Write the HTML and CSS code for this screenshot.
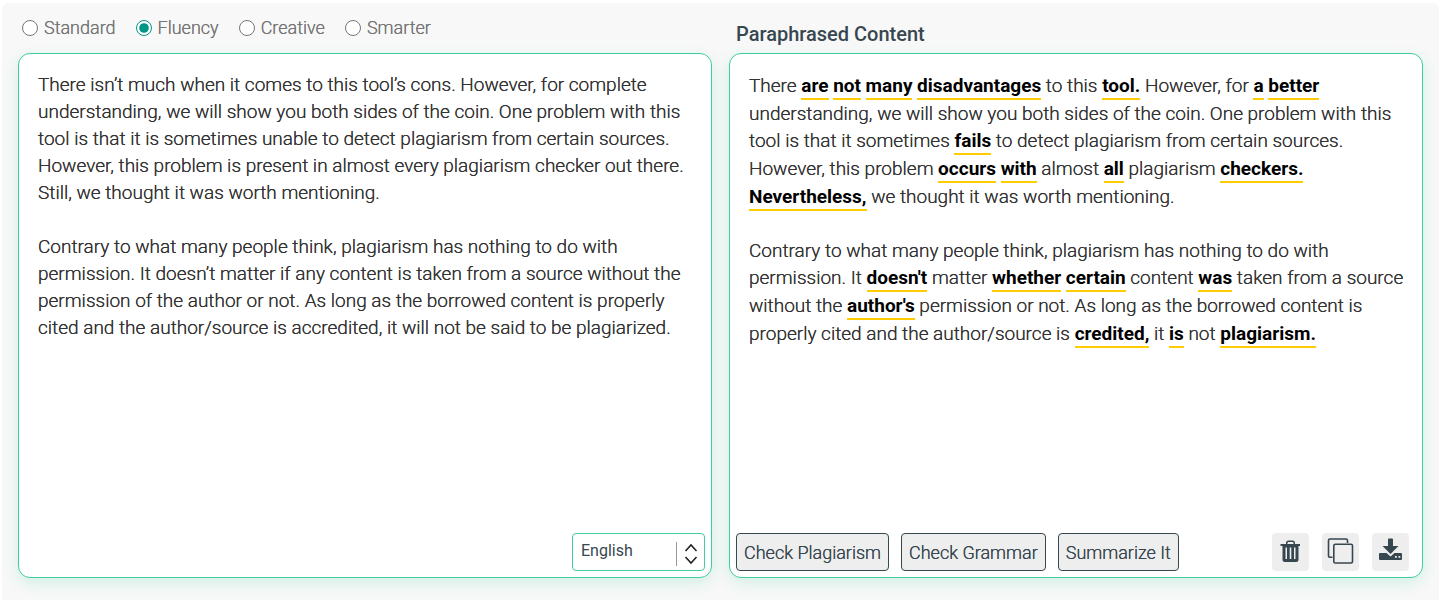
FILE: index.html
```html
<!DOCTYPE html>
<html lang="en">
<head>
<meta charset="utf-8">
<title>Paraphrasing Tool</title>
<link rel="stylesheet" href="styles.css">
</head>
<body>
<main class="tool">
  <section class="column">
    <div class="modes" role="radiogroup" aria-label="Mode">
      <label class="mode"><input type="radio" name="mode">Standard</label>
      <label class="mode"><input type="radio" name="mode" checked>Fluency</label>
      <label class="mode"><input type="radio" name="mode">Creative</label>
      <label class="mode"><input type="radio" name="mode">Smarter</label>
    </div>
    <div class="panel">
      <textarea class="source" aria-label="Text to paraphrase" spellcheck="false">There isn’t much when it comes to this tool’s cons. However, for complete understanding, we will show you both sides of the coin. One problem with this tool is that it is sometimes unable to detect plagiarism from certain sources. However, this problem is present in almost every plagiarism checker out there. Still, we thought it was worth mentioning.

Contrary to what many people think, plagiarism has nothing to do with permission. It doesn’t matter if any content is taken from a source without the permission of the author or not. As long as the borrowed content is properly cited and the author/source is accredited, it will not be said to be plagiarized.</textarea>
      <div class="bar bar-end">
        <div class="language">
          <select class="language-select" aria-label="Language"><option>English</option></select>
          <svg class="language-arrows" viewBox="0 0 30 26" aria-hidden="true"><path d="M1.500 0v24" stroke="#999"/><path d="M10.500 9l5.500-6 5.500 6M10.500 15l5.500 6 5.500-6" fill="none" stroke="#222" stroke-width="1.600"/></svg>
        </div>
      </div>
    </div>
  </section>
  <section class="column">
    <h2 class="title">Paraphrased Content</h2>
    <div class="panel">
      <div class="result">
        <p>There <b>are</b> <b>not</b> <b>many</b> <b>disadvantages</b> to this <b>tool.</b> However, for <b>a</b> <b>better</b> understanding, we will show you both sides of the coin. One problem with this tool is that it sometimes <b>fails</b> to detect plagiarism from certain sources. However, this problem <b>occurs</b> <b>with</b> almost <b>all</b> plagiarism <b>checkers.</b> <b>Nevertheless,</b> we thought it was worth mentioning.</p>
        <p>Contrary to what many people think, plagiarism has nothing to do with permission. It <b>doesn't</b> matter <b>whether</b> <b>certain</b> content <b>was</b> taken from a source without the <b>author's</b> permission or not. As long as the borrowed content is properly cited and the author/source is <b>credited,</b> it <b>is</b> not <b>plagiarism.</b></p>
      </div>
      <div class="bar">
        <button class="action" type="button">Check Plagiarism</button>
        <button class="action" type="button">Check Grammar</button>
        <button class="action" type="button">Summarize It</button>
        <div class="icons">
          <button class="icon" type="button" aria-label="Delete"><svg viewBox="0 0 37 38"><path fill="#37474f" fill-rule="evenodd" d="M8.500 11h5.500v-1a2.500 2.500 0 0 1 2.500-2.500h4a2.500 2.500 0 0 1 2.500 2.500v1H28v2H26.500v13.500a2.500 2.500 0 0 1-2.500 2.500H13a2.500 2.500 0 0 1-2.500-2.500V13h-2zM15.500 11h6v-1a1 1 0 0 0-1-1h-4a1 1 0 0 0-1 1zM13.500 14.500v11.500h1.500V14.500zM17.700 14.500v11.500h1.600V14.500zM22 14.500v11.500h1.500V14.500z"/></svg></button>
          <button class="icon" type="button" aria-label="Copy"><svg viewBox="0 0 37 38"><path fill="none" stroke="#37474f" stroke-width="1.600" d="M10.500 24.300H8a1.500 1.500 0 0 1-1.500-1.500V7.500A1.500 1.500 0 0 1 8 6h16a1.500 1.500 0 0 1 1.500 1.500V10"/><rect x="11.800" y="11.300" width="18.700" height="18.700" rx="1.500" fill="none" stroke="#37474f" stroke-width="1.600"/></svg></button>
          <button class="icon" type="button" aria-label="Download"><svg viewBox="0 0 37 38"><path fill="#37474f" fill-rule="evenodd" d="M16 6.500q0-1 1-1h3q1 0 1 1V13h5.500l-8 8-8-8H16zM8 20h6.500l4 3.500 4-3.500H29q1 0 1 1v5q0 1-1 1H8q-1 0-1-1v-5q0-1 1-1zM23 23v1.800h1.800V23zM26.500 23v1.800h1.800V23z"/></svg></button>
        </div>
      </div>
    </div>
  </section>
</main>
</body>
</html>
```
FILE: styles.css
```css
* { box-sizing: border-box; }

body {
  margin: 0;
  padding: 3px 1px 0 2px;
  background: #fff;
  color: #333;
  font-family: Roboto, "Liberation Sans", sans-serif;
  font-size: 18px;
  font-weight: 300;
}

.tool {
  display: grid;
  grid-template-columns: 1fr 1fr;
  gap: 17px;
  min-height: calc(100vh - 3px);
  padding: 0 16px 22px;
  background: #f8f8f8;
  border-radius: 6px 6px 0 0;
}

.column {
  display: flex;
  flex-direction: column;
  min-width: 0;
}

.modes {
  display: flex;
  gap: 20px;
  height: 50px;
  padding: 0 4px 1px;
  align-items: center;
  color: #757575;
}

.modes,
.source,
.result,
.action {
  text-shadow: 0 0 0 currentColor;
}

.mode {
  display: flex;
  align-items: center;
  gap: 6px;
}

.mode input {
  width: 16px;
  height: 16px;
  margin: 0;
  accent-color: #009688;
}

.title {
  height: 50px;
  margin: 0;
  padding: 12px 7px 0;
  color: #37474f;
  font-size: 20px;
  font-weight: 500;
  line-height: 38px;
}

.panel {
  display: flex;
  flex: 1;
  flex-direction: column;
  background: #fff;
  border: 1px solid #3dcd9f;
  border-radius: 12px;
  box-shadow: 0 5px 15px rgba(61, 205, 159, 0.2);
}

.source,
.result {
  flex: 1;
  width: 100%;
  padding: 18px 12px 0 19px;
  font-size: 19px;
  line-height: 27px;
}

.source {
  display: block;
  margin: 0;
  padding-top: 17px;
  border: 0;
  outline: 0;
  resize: none;
  overflow: hidden;
  background: transparent;
  color: inherit;
  font-family: inherit;
  font-weight: inherit;
}

.result p { margin: 0 0 26px; }

.result b {
  display: inline-block;
  border-bottom: 2px solid #ffcc00;
  color: #000;
  font-weight: 700;
  line-height: 24px;
  text-shadow: none;
}

.bar {
  display: flex;
  gap: 12px;
  padding: 0 13px 6px 6px;
}

.bar-end {
  justify-content: flex-end;
  padding-right: 6px;
}

.language {
  position: relative;
  width: 133px;
  height: 38px;
}

.language-select {
  width: 100%;
  height: 100%;
  padding: 0 32px 3px 8px;
  appearance: none;
  background: #fff;
  border: 1px solid #3dcd9f;
  border-radius: 4px;
  color: #37474f;
  font-family: inherit;
  font-size: 16px;
}

.language-arrows {
  position: absolute;
  top: 9px;
  right: 0;
  width: 30px;
  height: 26px;
  pointer-events: none;
}

.action {
  height: 38px;
  padding: 0 7px;
  background: #eee;
  border: 1px solid #37474f;
  border-radius: 4px;
  color: #37474f;
  font-family: inherit;
  font-size: 18px;
  font-weight: inherit;
}

.icons {
  display: flex;
  gap: 13px;
  margin-left: auto;
}

.icon {
  width: 37px;
  height: 38px;
  padding: 0;
  background: #eee;
  border: 0;
  border-radius: 4px;
}

.icon svg {
  display: block;
  width: 37px;
  height: 38px;
}
```
